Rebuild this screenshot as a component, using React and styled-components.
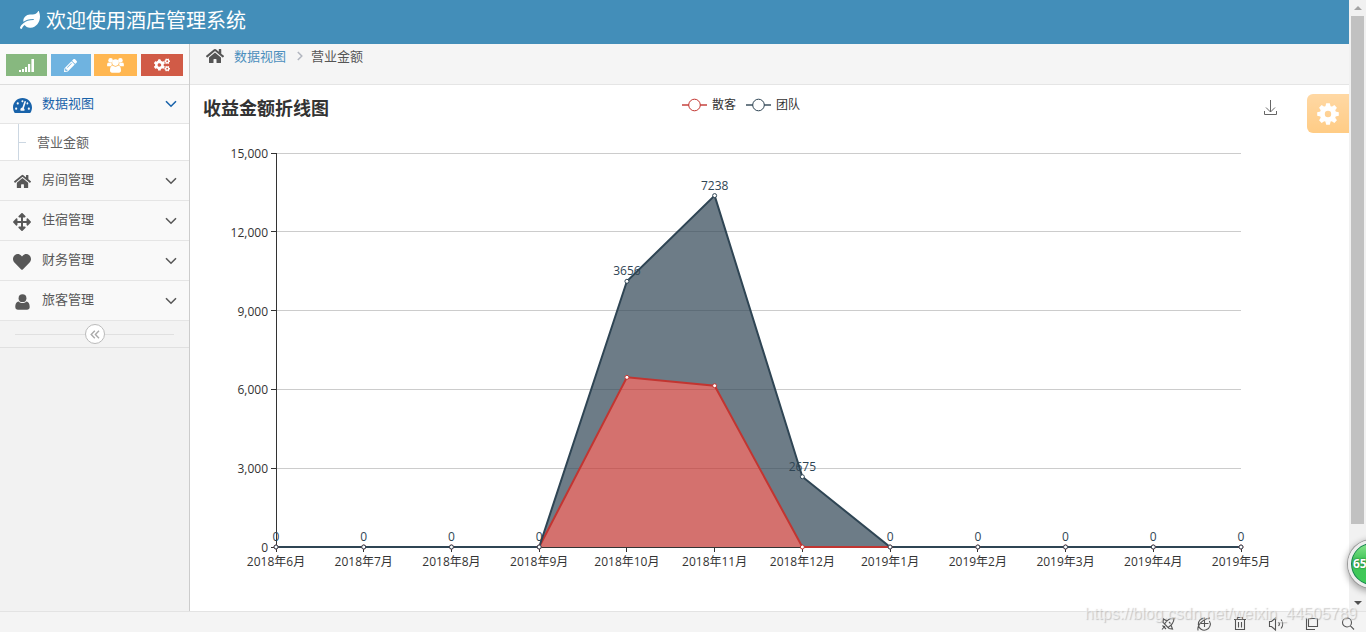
import React, { useLayoutEffect, useRef, useState } from 'react';
import styled, { createGlobalStyle } from 'styled-components';
import {
  FaLeaf,
  FaPencilAlt,
  FaCogs,
  FaHome,
  FaTachometerAlt,
  FaArrowsAlt,
  FaHeart,
} from 'react-icons/fa';

const GlobalStyle = createGlobalStyle`
  * {
    box-sizing: border-box;
  }
  body {
    margin: 0;
    font-family: 'Open Sans', 'Noto Sans CJK SC', sans-serif;
    font-size: 13px;
    line-height: 20px;
    color: #393939;
    overflow: hidden;
  }
  button {
    font: inherit;
    border: none;
    padding: 0;
    cursor: pointer;
  }
  a {
    text-decoration: none;
  }
`;

const Window = styled.div`
  height: 100vh;
  display: flex;
  flex-direction: column;
  position: relative;
  overflow: hidden;
`;
const Viewport = styled.div`
  flex: 1;
  min-height: 0;
  display: flex;
`;
const Page = styled.div`
  flex: 1;
  min-width: 0;
  display: flex;
  flex-direction: column;
  background-color: #fff;
`;
const Navbar = styled.header`
  height: 44px;
  flex-shrink: 0;
  padding: 0 20px 2px;
  display: flex;
  align-items: center;
  background-color: #438eb9;
`;
const Brand = styled.a`
  display: flex;
  align-items: center;
  gap: 6px;
  color: #fff;
  font-size: 20px;
  line-height: 40px;
`;
const BrandIcon = styled.span`
  height: 22px;
  display: flex;
  align-items: flex-start;
`;
const Body = styled.div`
  flex: 1;
  min-height: 0;
  display: flex;
`;

const Sidebar = styled.nav`
  width: 190px;
  flex-shrink: 0;
  background-color: #f2f2f2;
  border-right: 1px solid #ccc;
`;
const Shortcuts = styled.div`
  height: 41px;
  padding: 10px 6px 8px;
  display: flex;
  justify-content: space-between;
  background-color: #fafafa;
  border-bottom: 1px solid #ddd;
`;
const Shortcut = styled.button`
  width: ${(props) => props.$width}px;
  height: 22px;
  display: flex;
  align-items: center;
  justify-content: center;
  color: #fff;
  background-color: ${(props) => props.$color};
`;
const Menu = styled.ul`
  list-style: none;
  margin: 0;
  padding: 0;
`;
const MenuLink = styled.a`
  height: ${(props) => (props.$active ? 39 : 40)}px;
  padding: 0 12px;
  display: flex;
  align-items: center;
  color: ${(props) => (props.$active ? '#1963aa' : '#585858')};
  background-color: #f9f9f9;
  border-bottom: 1px solid #e5e5e5;
`;
const MenuIcon = styled.span`
  width: 20px;
  margin-right: 10px;
  padding-top: 2px;
  display: flex;
  justify-content: center;
`;
const MenuText = styled.span`
  flex: 1;
  padding-bottom: 3px;
`;
const SubItem = styled.div`
  background-color: #fff;
  border-bottom: 1px solid #e5e5e5;
`;
const SubLink = styled.a`
  height: 36px;
  margin-left: 18px;
  display: flex;
  align-items: center;
  gap: 11px;
  color: #616161;
  border-left: 1px solid #ccd7e2;

  &::before {
    content: '';
    width: 7px;
    border-top: 1px solid #ccd7e2;
  }
`;
const Collapse = styled.div`
  height: 27px;
  padding: 0 15px;
  display: flex;
  align-items: center;
  background-color: #f3f3f3;
  border-bottom: 1px solid #e0e0e0;

  &::before,
  &::after {
    content: '';
    flex: 1;
    border-top: 1px solid #e0e0e0;
  }
`;
const CollapseButton = styled.button`
  width: 20px;
  height: 20px;
  display: flex;
  align-items: center;
  justify-content: center;
  color: #aaa;
  background-color: #fff;
  border: 1px solid #bbb;
  border-radius: 50%;
`;

const Main = styled.main`
  flex: 1;
  min-width: 0;
  position: relative;
`;
const Breadcrumb = styled.div`
  height: 41px;
  padding: 0 16px 16px;
  display: flex;
  align-items: center;
  background-color: #f5f5f5;
  border-bottom: 1px solid #e5e5e5;
  color: #555;
`;
const BreadcrumbLink = styled.a`
  margin: 0 11px 0 10px;
  color: #4c8fbd;
`;
const BreadcrumbText = styled.span`
  margin-left: 8px;
`;
const Settings = styled.button`
  position: absolute;
  top: 50px;
  right: 0;
  width: 42px;
  height: 39px;
  display: flex;
  align-items: center;
  justify-content: center;
  color: #fff;
  background-image: linear-gradient(#ffd8a4, #ffcc85);
  border-radius: 6px 0 0 6px;
`;

const ChartPanel = styled.section`
  margin: 8px 65px 0 8px;
  position: relative;
`;
const ChartTitle = styled.h2`
  position: absolute;
  top: 2px;
  left: 5px;
  margin: 0;
  font-size: 18px;
  line-height: 26px;
  color: #333;
`;
const Legend = styled.div`
  position: absolute;
  top: 1px;
  left: 0;
  right: 0;
  display: flex;
  justify-content: center;
  gap: 10px;
`;
const LegendItem = styled.button`
  display: flex;
  align-items: center;
  gap: 5px;
  font-size: 12px;
  line-height: 22px;
  color: #333;
  background: none;
`;
const Download = styled.button`
  position: absolute;
  top: 7px;
  right: 6px;
  display: flex;
  background: none;
`;
const ChartSvg = styled.svg`
  display: block;
  width: 100%;
  font-size: 12px;
`;

const Scrollbar = styled.div`
  width: 17px;
  flex-shrink: 0;
  display: flex;
  flex-direction: column;
  align-items: center;
  padding: 0 2px;
  background-color: #f1f1f1;
`;
const ScrollArrow = styled.span`
  height: 16px;
  display: flex;
  align-items: center;
`;
const ScrollTrack = styled.div`
  flex: 1;
  width: 100%;
`;
const ScrollThumb = styled.div`
  height: calc(88% - 2px);
  background-color: #c1c1c1;
`;
const StatusBar = styled.footer`
  height: 21px;
  flex-shrink: 0;
  padding: 4px 10px 0 0;
  display: flex;
  justify-content: flex-end;
  gap: 20px;
  background-color: #f4f4f4;
  border-top: 1px solid #e3e3e3;
`;
const StatusButton = styled.button`
  width: 16px;
  height: 16px;
  background: none;
`;
const Watermark = styled.span`
  position: absolute;
  right: 9px;
  bottom: 8px;
  font-family: 'Liberation Sans', Arial, sans-serif;
  font-size: 16px;
  line-height: 20px;
  color: rgba(255, 255, 255, 0.5);
  text-shadow: 1px 1px 1px rgba(150, 150, 150, 0.5);
  pointer-events: none;
`;
const SpeedBall = styled.div`
  position: absolute;
  right: -30px;
  bottom: 44px;
  width: 48px;
  height: 48px;
  padding-left: 2px;
  display: flex;
  align-items: center;
  font-size: 12px;
  font-weight: bold;
  color: #fff;
  text-shadow: 0 0 2px #175c2c;
  background-image: linear-gradient(#8be58f, #42c559 40%, #3dcb58);
  border: 3px solid #ededed;
  border-radius: 50%;
  box-shadow: 0 0 0 1px #999, inset 0 0 0 1px #197c55, 0 2px 6px 2px rgba(0, 0, 0, 0.3);
`;

const Chevron = ({ color = 'currentColor' }) => (
  <svg width="12" height="8" fill="none" stroke={color} strokeWidth="1.6">
    <path d="M1 1.2L6 6.2L11 1.2" />
  </svg>
);

const ChevronRight = () => (
  <svg width="6" height="10" fill="none" stroke="#b2b6bf" strokeWidth="1.5">
    <path d="M0.8 1L4.8 5L0.8 9" />
  </svg>
);

const DoubleLeft = () => (
  <svg width="10" height="9" fill="none" stroke="currentColor" strokeWidth="1.4">
    <path d="M4.8 0.8L1.2 4.5L4.8 8.2M9 0.8L5.4 4.5L9 8.2" />
  </svg>
);

const SignalIcon = () => (
  <svg width="15" height="13" fill="currentColor">
    <path d="M0 11H2V13H0ZM3 10H5V13H3ZM6 8H8V13H6ZM9 5H11.2V13H9ZM12.4 0H15V13H12.4Z" />
  </svg>
);

const GroupIcon = () => (
  <svg width="17" height="15" fill="currentColor">
    <circle cx="3.6" cy="2.4" r="2.3" />
    <circle cx="13.4" cy="2.4" r="2.3" />
    <circle cx="8.5" cy="4.6" r="3.3" />
    <path d="M1 4.6C0 5.4 0 7 0.2 8.3H3.8C4.6 7.6 5 7.2 4.8 6C4.6 5.2 4.4 4.8 4.6 4.4C3.6 5.2 2 5.2 1 4.6ZM16 4.6C17 5.4 17 7 16.8 8.3H13.2C12.4 7.6 12 7.2 12.2 6C12.4 5.2 12.6 4.8 12.4 4.4C13.4 5.2 15 5.2 16 4.6Z" />
    <path d="M5.4 7.6C3.6 8 3 10.4 3 12.6C3 14 3.8 14.7 5 14.7H12C13.2 14.7 14 14 14 12.6C14 10.4 13.4 8 11.6 7.6C9.8 9 7.2 9 5.4 7.6Z" />
  </svg>
);

const PersonIcon = () => (
  <svg width="15" height="16" fill="currentColor">
    <circle cx="7.5" cy="4.2" r="3.9" />
    <path d="M3.6 7.4C1 7.8 0.3 10.4 0.3 13C0.3 14.8 1.4 15.8 3 15.8H12C13.6 15.8 14.7 14.8 14.7 13C14.7 10.4 14 7.8 11.4 7.4C9.2 9.4 5.8 9.4 3.6 7.4Z" />
  </svg>
);

const GearIcon = () => (
  <svg width="22" height="22" viewBox="-11 -11 22 22">
    <circle r="5.7" fill="none" stroke="currentColor" strokeWidth="5" />
    {[0, 45, 90, 135, 180, 225, 270, 315].map((angle) => (
      <path
        key={angle}
        d="M-2.6 -7.4L-1.8 -10.8H1.8L2.6 -7.4Z"
        fill="currentColor"
        transform={`rotate(${angle})`}
      />
    ))}
  </svg>
);

const shortcuts = [
  { label: '统计', color: '#87b87f', width: 41, icon: <SignalIcon /> },
  { label: '编辑', color: '#6fb3e0', width: 40, icon: <FaPencilAlt size={13} /> },
  { label: '用户', color: '#ffb752', width: 43, icon: <GroupIcon /> },
  { label: '设置', color: '#d15b47', width: 42, icon: <FaCogs size={16} /> },
];

const menus = [
  { text: '房间管理', icon: <FaHome size={17} /> },
  { text: '住宿管理', icon: <FaArrowsAlt size={18} /> },
  { text: '财务管理', icon: <FaHeart size={18} /> },
  { text: '旅客管理', icon: <PersonIcon /> },
];

const months = [
  '2018年6月',
  '2018年7月',
  '2018年8月',
  '2018年9月',
  '2018年10月',
  '2018年11月',
  '2018年12月',
  '2019年1月',
  '2019年2月',
  '2019年3月',
  '2019年4月',
  '2019年5月',
];
const guests = [0, 0, 0, 0, 6460, 6140, 0, 0, 0, 0, 0, 0];
const teams = [0, 0, 0, 0, 3656, 7238, 2675, 0, 0, 0, 0, 0];
const ticks = [0, 3000, 6000, 9000, 12000, 15000];

const RED = '#c23531';
const NAVY = '#2f4554';

const LegendMark = ({ color }) => (
  <svg width="25" height="14" fill="#fff" stroke={color}>
    <path d="M0 7H25" strokeWidth="2" strokeOpacity="0.7" />
    <circle cx="12.5" cy="7" r="5.8" />
  </svg>
);

const RevenueChart = () => {
  const ref = useRef(null);
  const [width, setWidth] = useState(1086);

  useLayoutEffect(() => {
    const update = () => setWidth(ref.current.clientWidth);
    update();
    window.addEventListener('resize', update);
    return () => window.removeEventListener('resize', update);
  }, []);

  const left = 78;
  const right = width - 43;
  const top = 60;
  const bottom = 454;
  const x = (i) => left + ((right - left) * i) / (months.length - 1);
  const y = (v) => bottom - ((bottom - top) * v) / 15000;
  const stacked = teams.map((v, i) => v + guests[i]);
  const points = (data) => data.map((v, i) => `${x(i)},${y(v)}`);
  const redPoints = points(guests);
  const navyPoints = points(stacked);

  return (
    <ChartPanel ref={ref}>
      <ChartTitle>收益金额折线图</ChartTitle>
      <Legend>
        <LegendItem>
          <LegendMark color={RED} />
          散客
        </LegendItem>
        <LegendItem>
          <LegendMark color={NAVY} />
          团队
        </LegendItem>
      </Legend>
      <Download aria-label="保存为图片">
        <svg width="15" height="16" fill="none" stroke="#666">
          <path d="M7.5 0V12M3 7.5L7.5 12L12 7.5M1.5 11V14.5H13.5V11" />
        </svg>
      </Download>
      <ChartSvg height="514">
        {ticks.map((t) => (
          <g key={t}>
            {t > 0 && (
              <path
                d={`M${left} ${Math.floor(y(t)) + 0.5}H${right}`}
                stroke="#ccc"
              />
            )}
            <text x={left - 8} y={y(t) + 5} textAnchor="end" fill="#333">
              {t.toLocaleString('en-US')}
            </text>
          </g>
        ))}
        <polygon
          points={[...redPoints, `${right},${bottom}`, `${left},${bottom}`].join(' ')}
          fill={RED}
          fillOpacity="0.7"
        />
        <polygon
          points={[...navyPoints, ...[...redPoints].reverse()].join(' ')}
          fill={NAVY}
          fillOpacity="0.7"
        />
        <path
          d={`M${left + 0.5} ${top}V${bottom}M${left} ${bottom + 0.5}H${right}`}
          stroke="#333"
        />
        {ticks.map((t) => (
          <path
            key={t}
            d={`M${left - 5} ${Math.floor(y(t)) + 0.5}H${left}`}
            stroke="#333"
          />
        ))}
        {months.map((month, i) => (
          <g key={month}>
            <path
              d={`M${Math.floor(x(i)) + 0.5} ${bottom}V${bottom + 5}`}
              stroke="#333"
            />
            <text x={x(i)} y={bottom + 19} textAnchor="middle" fill="#333">
              {month}
            </text>
          </g>
        ))}
        <polyline points={redPoints.join(' ')} fill="none" stroke={RED} strokeWidth="2" />
        <polyline points={navyPoints.join(' ')} fill="none" stroke={NAVY} strokeWidth="2" />
        {months.map((month, i) => (
          <g key={month} fill="#fff">
            <circle cx={x(i)} cy={y(guests[i])} r="2" stroke={RED} />
            <circle cx={x(i)} cy={y(stacked[i])} r="2" stroke={NAVY} />
            <text x={x(i)} y={y(stacked[i]) - 6} textAnchor="middle" fill={NAVY}>
              {teams[i]}
            </text>
          </g>
        ))}
      </ChartSvg>
    </ChartPanel>
  );
};

const statusIcons = [
  {
    label: '加速',
    path: 'M14 2C10 2 7 4 4.5 8L8 11.5C12 9 14 6 14 2ZM7 5L3.5 3L3 6.5L5 8M11 9L12.5 13L9 12.5L8 11M5 10L2 13.5M9 6L10.5 7.5M2.5 9.5L6 13',
  },
  {
    label: '浏览',
    path: 'M13.4 5A6 6 0 1 1 9 2.2M2 14.5C1 10 6 3 14 2M5 7.5H12.5M8.5 4V11',
  },
  {
    label: '清除',
    path: 'M2 3.5H14M5.5 3V1.5H10.5V3M3.5 4V13.5H12.5V4M6.5 6V11.5M9.5 6V11.5',
  },
  {
    label: '声音',
    path: 'M1.5 5.5H3.5L7.5 2V14L3.5 10.5H1.5ZM10.5 6A3 3 0 0 1 10.5 10M13 3.5A7 7 0 0 1 13 12.5',
  },
  {
    label: '窗口',
    path: 'M4.5 2.5H13.5V10.5H4.5ZM2.5 2V13.5H11',
  },
  {
    label: '搜索',
    path: 'M11.5 6.5A4.5 4.5 0 1 1 2.5 6.5A4.5 4.5 0 1 1 11.5 6.5M10.2 9.7L14 13.5',
  },
];

const App = () => {
  return (
    <Window>
      <GlobalStyle />
      <Viewport>
        <Page>
          <Navbar>
            <Brand href="#">
              <BrandIcon>
                <FaLeaf />
              </BrandIcon>
              欢迎使用酒店管理系统
            </Brand>
          </Navbar>
          <Body>
            <Sidebar>
              <Shortcuts>
                {shortcuts.map((s) => (
                  <Shortcut key={s.color} $color={s.color} $width={s.width} aria-label={s.label}>
                    {s.icon}
                  </Shortcut>
                ))}
              </Shortcuts>
              <Menu>
                <li>
                  <MenuLink href="#" $active>
                    <MenuIcon>
                      <FaTachometerAlt size={19} />
                    </MenuIcon>
                    <MenuText>数据视图</MenuText>
                    <Chevron />
                  </MenuLink>
                  <SubItem>
                    <SubLink href="#">营业金额</SubLink>
                  </SubItem>
                </li>
                {menus.map((m) => (
                  <li key={m.text}>
                    <MenuLink href="#">
                      <MenuIcon>{m.icon}</MenuIcon>
                      <MenuText>{m.text}</MenuText>
                      <Chevron />
                    </MenuLink>
                  </li>
                ))}
              </Menu>
              <Collapse>
                <CollapseButton aria-label="收起菜单">
                  <DoubleLeft />
                </CollapseButton>
              </Collapse>
            </Sidebar>
            <Main>
              <Breadcrumb>
                <FaHome size={18} />
                <BreadcrumbLink href="#">数据视图</BreadcrumbLink>
                <ChevronRight />
                <BreadcrumbText>营业金额</BreadcrumbText>
              </Breadcrumb>
              <Settings aria-label="设置">
                <GearIcon />
              </Settings>
              <RevenueChart />
            </Main>
          </Body>
        </Page>
        <Scrollbar>
          <ScrollArrow>
            <svg width="8" height="4" fill="#a3a3a3">
              <path d="M0 4L4 0L8 4Z" />
            </svg>
          </ScrollArrow>
          <ScrollTrack>
            <ScrollThumb />
          </ScrollTrack>
          <ScrollArrow>
            <svg width="8" height="4" fill="#505050">
              <path d="M0 0H8L4 4Z" />
            </svg>
          </ScrollArrow>
        </Scrollbar>
      </Viewport>
      <StatusBar>
        {statusIcons.map((icon) => (
          <StatusButton key={icon.label} aria-label={icon.label}>
            <svg width="16" height="16" fill="none" stroke="#555" strokeWidth="1.1">
              <path d={icon.path} />
            </svg>
          </StatusButton>
        ))}
      </StatusBar>
      <SpeedBall>65</SpeedBall>
      <Watermark>https://blog.csdn.net/weixin_44505789</Watermark>
    </Window>
  );
};

export default App;
